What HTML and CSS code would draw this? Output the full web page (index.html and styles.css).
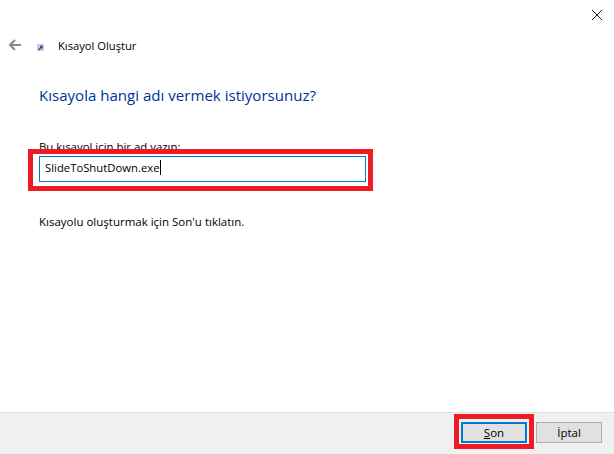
FILE: index.html
```html
<!DOCTYPE html>
<html lang="tr">
<head>
<meta charset="utf-8">
<title>Kısayol Oluştur</title>
<link rel="stylesheet" href="styles.css">
</head>
<body>
<div class="window">
  <div class="titlebar">
    <svg class="close" width="10" height="10" viewBox="0 0 10 10"><path d="M0 0L10 10M10 0L0 10" stroke="#111" stroke-width="1" fill="none"/></svg>
  </div>
  <div class="nav">
    <svg class="back" width="12" height="12" viewBox="0 0 12 12"><path d="M6 1L1 6L6 11M1 6H12" stroke="#8a8a8a" stroke-width="2" fill="none"/></svg>
    <svg class="app" width="7" height="7" viewBox="0 0 7 7"><rect width="7" height="7" fill="#c9cdd3"/><path d="M1.500 6L5 2.500M3 2.500H5V4.500" stroke="#1c4f9c" stroke-width="1.300" fill="none"/></svg>
    <span class="nav-title">Kısayol Oluştur</span>
  </div>
  <main class="content">
    <h1 class="heading">Kısayola hangi adı vermek istiyorsunuz?</h1>
    <label class="label">Bu kısayol için bir ad yazın:</label>
    <div class="field">
      <div class="input">SlideToShutDown.exe<span class="caret"></span></div>
      <div class="mark mark-field"></div>
    </div>
    <p class="hint">Kısayolu oluşturmak için Son'u tıklatın.</p>
  </main>
  <footer class="footer">
    <div class="btn-wrap">
      <div class="btn btn-primary"><span><u>S</u>on</span></div>
      <div class="mark mark-btn"></div>
    </div>
    <div class="btn">İptal</div>
  </footer>
</div>
</body>
</html>
```
FILE: styles.css
```css
* { box-sizing: border-box; }
html, body { margin: 0; padding: 0; }
body { background: #fff; font-family: "Open Sans", "Noto Sans", sans-serif; font-size: 11.5px; color: #000; }
.window { width: 614px; height: 454px; display: flex; flex-direction: column; overflow: hidden; }
.titlebar { height: 32px; display: flex; justify-content: flex-end; padding: 10px 12px 0 0; }
.close { display: block; }
.nav { height: 26px; display: flex; align-items: center; padding-left: 9px; }
.back { display: block; }
.app { display: block; margin: 4px 0 0 16px; }
.nav-title { margin-left: 14px; line-height: 16px; font-size: 11.200px; margin-top: 1px; }
.content { flex: 1; padding: 0 0 0 39px; }
.heading { margin: 26px 0 0; font-size: 15.070px; line-height: 22px; font-weight: 400; color: #003399; }
.label { display: block; margin-top: 33px; line-height: 16px; height: 16px; font-size: 11.400px; }
.field { position: relative; width: 327px; margin-top: 1px; font-size: 11.300px; }
.input { height: 26px; border: 1px solid #0078d7; display: flex; align-items: center; padding: 0 0 3px 5px; background: #fff; }
.caret { width: 1px; height: 15px; background: #000; }
.mark { position: absolute; border: 5px solid #ed1c24; pointer-events: none; }
.mark-field { left: -11px; top: -7px; width: 345px; height: 42px; }
.hint { margin: 32px 0 0; line-height: 16px; }
.footer { height: 42px; background: #f0f0f0; border-top: 1px solid #dfdfdf; display: flex; gap: 9px; padding: 9px 0 0 461px; }
.btn-wrap { position: relative; }
.btn { width: 66px; height: 21px; border: 1px solid #adadad; background: #e1e1e1; display: flex; align-items: center; justify-content: center; }
.btn-primary { border: 2px solid #0078d7; }
.mark-btn { left: -7px; top: -8px; width: 80px; height: 35px; }
```
